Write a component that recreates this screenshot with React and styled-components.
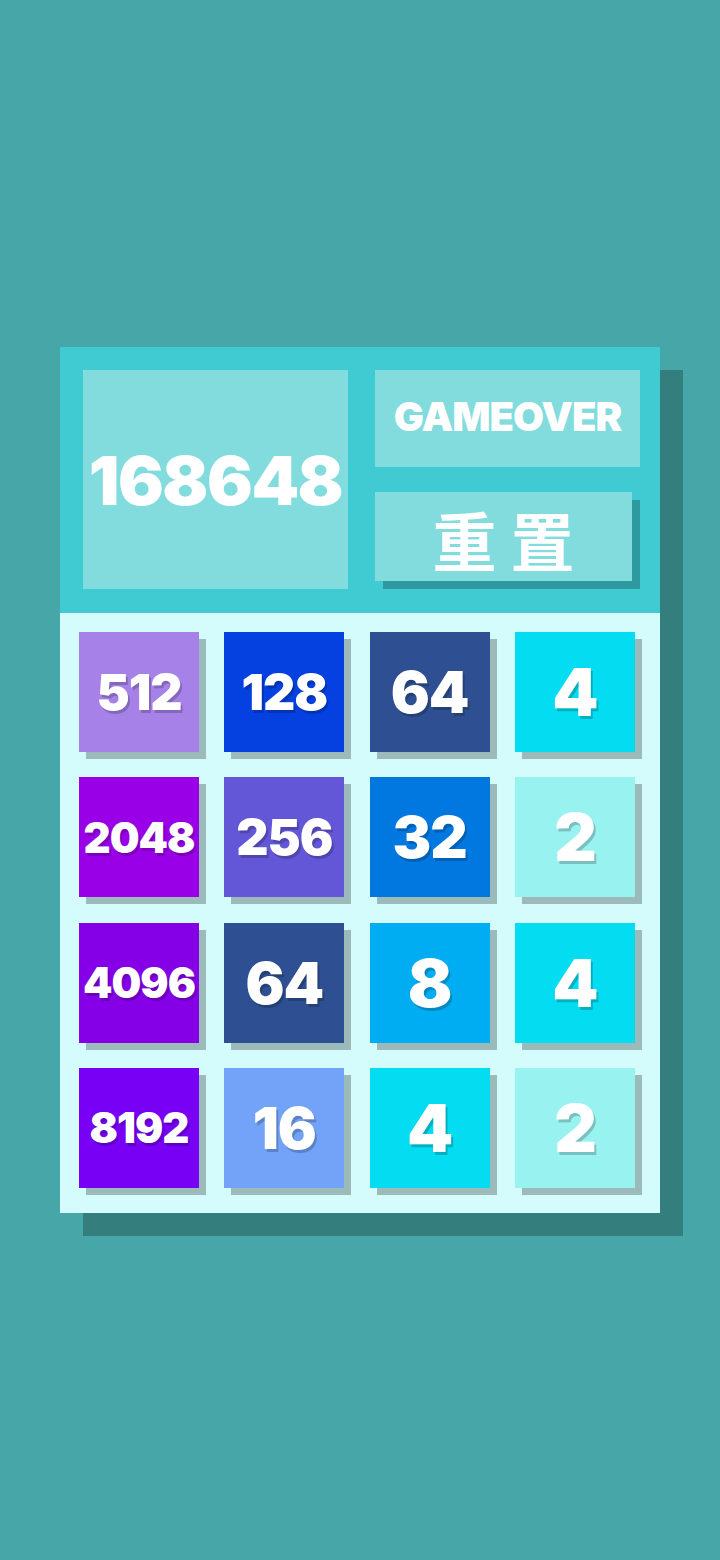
import React from "react";
import styled, { createGlobalStyle } from "styled-components";

const GlobalStyle = createGlobalStyle`
  html, body {
    margin: 0;
    padding: 0;
    background: #46a6a8;
  }
`;

const TILE_COLORS = {
  2: "#98f2f0",
  4: "#03dcf1",
  8: "#00adf2",
  16: "#72a3f8",
  32: "#0178e0",
  64: "#2e5092",
  128: "#0541e0",
  256: "#6357d8",
  512: "#a682e8",
  2048: "#9a00e8",
  4096: "#8500e6",
  8192: "#7700f5",
};

const FONT_SIZES = { 1: 66, 2: 58, 3: 50, 4: 42 };

const board = [
  [512, 128, 64, 4],
  [2048, 256, 32, 2],
  [4096, 64, 8, 4],
  [8192, 16, 4, 2],
];

export default function App() {
  return (
    <Page>
      <GlobalStyle />
      <Game>
        <Header>
          <ScoreBox>168648</ScoreBox>
          <Side>
            <Status>GAMEOVER</Status>
            <ResetButton>重置</ResetButton>
          </Side>
        </Header>
        <Board>
          {board.flat().map((value, i) => (
            <Tile key={i} $color={TILE_COLORS[value]}>
              <TileNumber $size={FONT_SIZES[String(value).length]}>
                {value}
              </TileNumber>
            </Tile>
          ))}
        </Board>
      </Game>
    </Page>
  );
}

const Page = styled.div`
  min-height: 1560px;
  display: flex;
  align-items: center;
  justify-content: center;
  font-family: "Inter", "Noto Sans", sans-serif;
`;

const Game = styled.div`
  width: 600px;
  display: flex;
  flex-direction: column;
  box-shadow: 23px 23px 0 #357e7e;
`;

const Header = styled.div`
  height: 266px;
  box-sizing: border-box;
  background: #40cad2;
  padding: 23px 20px 24px 23px;
  display: grid;
  grid-template-columns: 265px 265px;
  column-gap: 27px;
`;

const ScoreBox = styled.div`
  background: #82dcdd;
  display: flex;
  align-items: center;
  justify-content: center;
  color: #fff;
  font-size: 68px;
  font-weight: 900;
  letter-spacing: -1.5px;
`;

const Side = styled.div`
  display: flex;
  flex-direction: column;
  gap: 25px;
`;

const Status = styled.div`
  height: 97px;
  background: #82dcdd;
  display: flex;
  align-items: center;
  justify-content: center;
  color: #fff;
  font-size: 40px;
  font-weight: 900;
  letter-spacing: -1px;
  padding-bottom: 4px;
  box-sizing: border-box;
`;

const ResetButton = styled.button`
  width: 257px;
  height: 89px;
  border: none;
  padding: 0;
  background: #82dcdd;
  box-shadow: 8px 8px 0 #2e9a9f;
  color: #fff;
  font-family: "Noto Sans CJK SC", sans-serif;
  font-size: 64px;
  font-weight: 700;
  letter-spacing: 14px;
  text-indent: 14px;
  cursor: pointer;
`;

const Board = styled.div`
  height: 600px;
  box-sizing: border-box;
  background: #d4fcfc;
  padding: 19px 25px 25px 19px;
  display: grid;
  grid-template-columns: repeat(4, 120px);
  grid-template-rows: repeat(4, 120px);
  gap: 25.33px;
`;

const Tile = styled.div`
  background: ${(p) => p.$color};
  box-shadow: 7px 7px 0 #9dbaba;
  display: flex;
  align-items: center;
  justify-content: center;
`;

const TileNumber = styled.span`
  color: #fff;
  font-size: ${(p) => p.$size}px;
  font-weight: 900;
  letter-spacing: -1px;
  text-shadow: 2px 3px 0 rgba(0, 0, 0, 0.2);
`;
